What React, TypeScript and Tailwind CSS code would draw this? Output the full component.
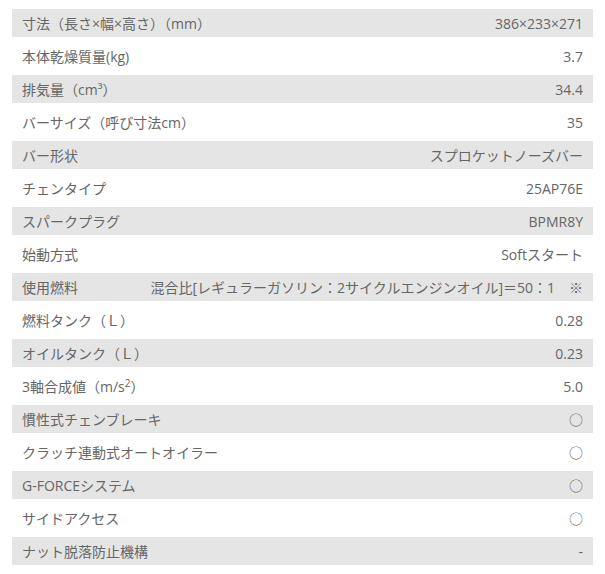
import React from "react";

type Row = { label: React.ReactNode; value: React.ReactNode };

const rows: Row[] = [
  { label: "寸法（長さ×幅×高さ）（mm）", value: "386×233×271" },
  { label: "本体乾燥質量(kg)", value: "3.7" },
  { label: "排気量（cm³）", value: "34.4" },
  { label: "バーサイズ（呼び寸法cm）", value: "35" },
  { label: "バー形状", value: "スプロケットノーズバー" },
  { label: "チェンタイプ", value: "25AP76E" },
  { label: "スパークプラグ", value: "BPMR8Y" },
  { label: "始動方式", value: "Softスタート" },
  { label: "使用燃料", value: "混合比[レギュラーガソリン：2サイクルエンジンオイル]＝50：1　※" },
  { label: "燃料タンク（Ｌ）", value: "0.28" },
  { label: "オイルタンク（Ｌ）", value: "0.23" },
  {
    label: (
      <>
        3軸合成値（m/s<sup className="text-[10px] relative -top-[5px] align-baseline">2</sup>）
      </>
    ),
    value: "5.0",
  },
  { label: "慣性式チェンブレーキ", value: "○" },
  { label: "クラッチ連動式オートオイラー", value: "○" },
  { label: "G-FORCEシステム", value: "○" },
  { label: "サイドアクセス", value: "○" },
  { label: "ナット脱落防止機構", value: "-" },
];

export default function App() {
  return (
    <div
      className="w-[605px] h-[574px] bg-white pt-[9px] pl-[12px] pr-[12px]"
      style={{ fontFamily: '"Open Sans", "Noto Sans CJK JP", sans-serif' }}
    >
      <div className="flex flex-col gap-[5px]">
        {rows.map((r, i) => (
          <div
            key={i}
            className={`flex items-center justify-between h-[28px] pl-[10px] pr-[10px] text-[14px] text-[#666666] ${
              i % 2 === 0 ? "bg-[#e5e5e5]" : "bg-white"
            }`}
          >
            <span className="whitespace-nowrap">{r.label}</span>
            <span className="whitespace-nowrap text-right">{r.value}</span>
          </div>
        ))}
      </div>
    </div>
  );
}
